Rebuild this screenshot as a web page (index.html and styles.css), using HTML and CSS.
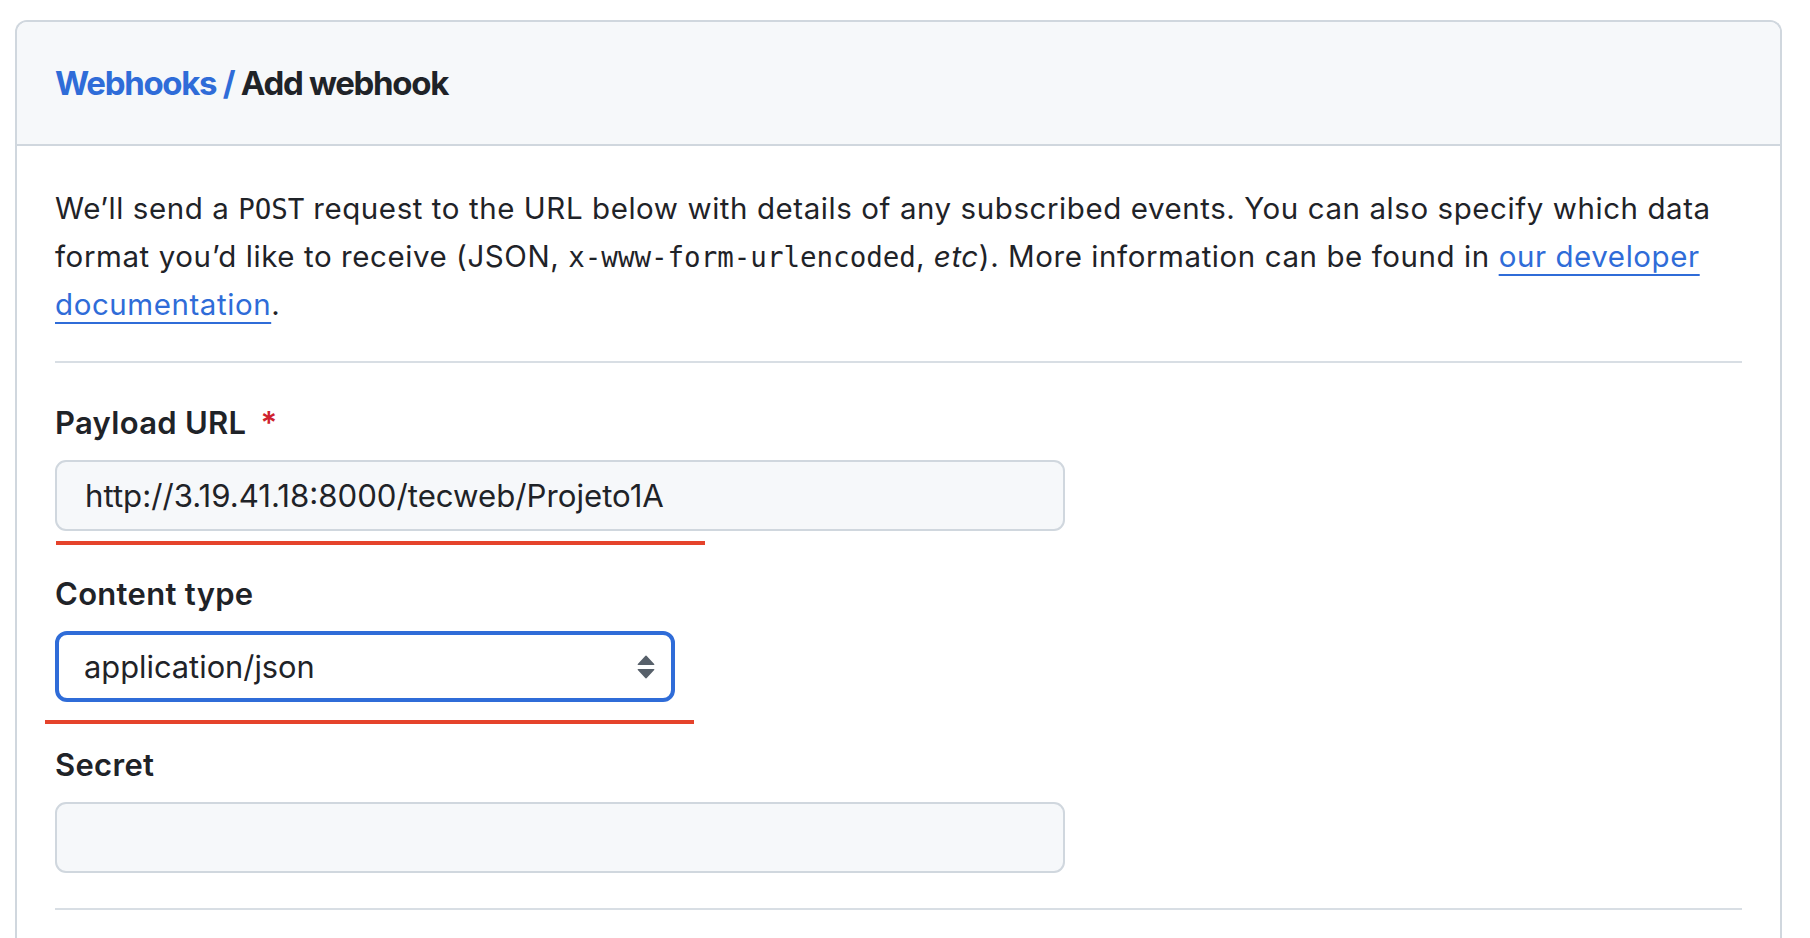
FILE: index.html
```html
<!DOCTYPE html>
<html lang="en">
<head>
<meta charset="utf-8">
<title>Add webhook</title>
<link rel="stylesheet" href="styles.css">
</head>
<body>
<div class="page">
  <div class="box">
    <div class="box-header">
      <h2 class="title"><a class="crumb" href="#">Webhooks</a> <span class="sep">/</span> Add webhook</h2>
    </div>
    <div class="box-body">
      <p class="intro">We’ll send a <code>POST</code> request to the URL below with details of any subscribed events. You can also specify which data format you’d like to receive (JSON, <code>x-www-form-urlencoded</code>, <em>etc</em>). More information can be found in <a class="link" href="#">our developer documentation</a>.</p>
      <hr class="divider">
      <div class="field">
        <label class="label">Payload URL <span class="req">*</span></label>
        <div class="input">http://3.19.41.18:8000/tecweb/Projeto1A</div>
        <div class="mark mark-url"></div>
      </div>
      <div class="field">
        <label class="label">Content type</label>
        <div class="select">
          <span>application/json</span>
          <svg class="arrows" width="18" height="24" viewBox="0 0 18 24"><path d="M8 1.2 Q9 0 10 1.2 L17.2 9 Q18 10 16.6 10 L1.4 10 Q0 10 0.8 9 Z" fill="#57606a"/><path d="M1.4 14 L16.6 14 Q18 14 17.2 15 L10 22.8 Q9 24 8 22.8 L0.8 15 Q0 14 1.4 14 Z" fill="#57606a"/></svg>
        </div>
        <div class="mark mark-type"></div>
      </div>
      <div class="field">
        <label class="label">Secret</label>
        <div class="input"></div>
      </div>
      <hr class="divider divider-bottom">
    </div>
  </div>
</div>
</body>
</html>
```

FILE: styles.css
```css
html, body {
  margin: 0;
  padding: 0;
  background: #ffffff;
}

body {
  font-family: Inter, "Liberation Sans", sans-serif;
  color: #1f2328;
}

.page {
  padding: 20px 28px 0 15px;
}

.box {
  border: 2px solid #d0d7de;
  border-bottom: none;
  border-radius: 12px 12px 0 0;
  overflow: hidden;
  height: 940px;
  box-sizing: border-box;
}

.box-header {
  background: #f6f8fa;
  border-bottom: 2px solid #d0d7de;
  padding: 37px 38px;
}

.title {
  margin: 0;
  font-size: 33px;
  line-height: 48px;
  font-weight: 650;
  color: #1f2328;
  letter-spacing: -1.3px;
}

.crumb, .sep {
  color: #2f6cd8;
  text-decoration: none;
}

.box-body {
  padding: 38px 38px 0;
}

.intro {
  margin: 0;
  font-size: 29.5px;
  line-height: 48px;
  letter-spacing: 0.57px;
  color: #1f2328;
}

.intro code {
  font-family: "DejaVu Sans Mono", "Liberation Mono", monospace;
  font-size: 27.5px;
  line-height: 1;
  letter-spacing: 0;
}

.link {
  color: #2f6cd8;
  text-decoration: underline;
  text-decoration-thickness: 2px;
  text-underline-offset: 7px;
}

.divider {
  margin: 33px 0 0;
  border: none;
  border-top: 2px solid #d8dee4;
  height: 0;
}

.divider-bottom {
  margin-top: 35px;
}

.field {
  position: relative;
  margin-top: 40px;
  display: flex;
  flex-direction: column;
  gap: 15px;
}

.divider + .field {
  margin-top: 37px;
}

.label {
  display: block;
  font-size: 31px;
  line-height: 45px;
  font-weight: 600;
  letter-spacing: 0.3px;
  color: #1f2328;
}

.req {
  color: #cf222e;
  margin-left: 6px;
}

.input {
  box-sizing: border-box;
  width: 1010px;
  height: 71px;
  border: 2px solid #d0d7de;
  border-radius: 11px;
  background: #f6f8fa;
  padding: 0 28px;
  display: flex;
  align-items: center;
  font-size: 31.2px;
  color: #1f2328;
}

.select {
  box-sizing: border-box;
  width: 620px;
  height: 71px;
  border: 4px solid #2f6cd8;
  border-radius: 12px;
  background: #ffffff;
  padding: 0 16px 0 25px;
  display: flex;
  align-items: center;
  justify-content: space-between;
  font-size: 30.8px;
  color: #1f2328;
}

.arrows {
  display: block;
}

.mark {
  position: absolute;
  height: 4px;
  width: 649px;
  background: #e5432b;
}

.mark-url {
  left: 1px;
  top: 141px;
}

.mark-type {
  left: -10px;
  top: 149px;
}
```
